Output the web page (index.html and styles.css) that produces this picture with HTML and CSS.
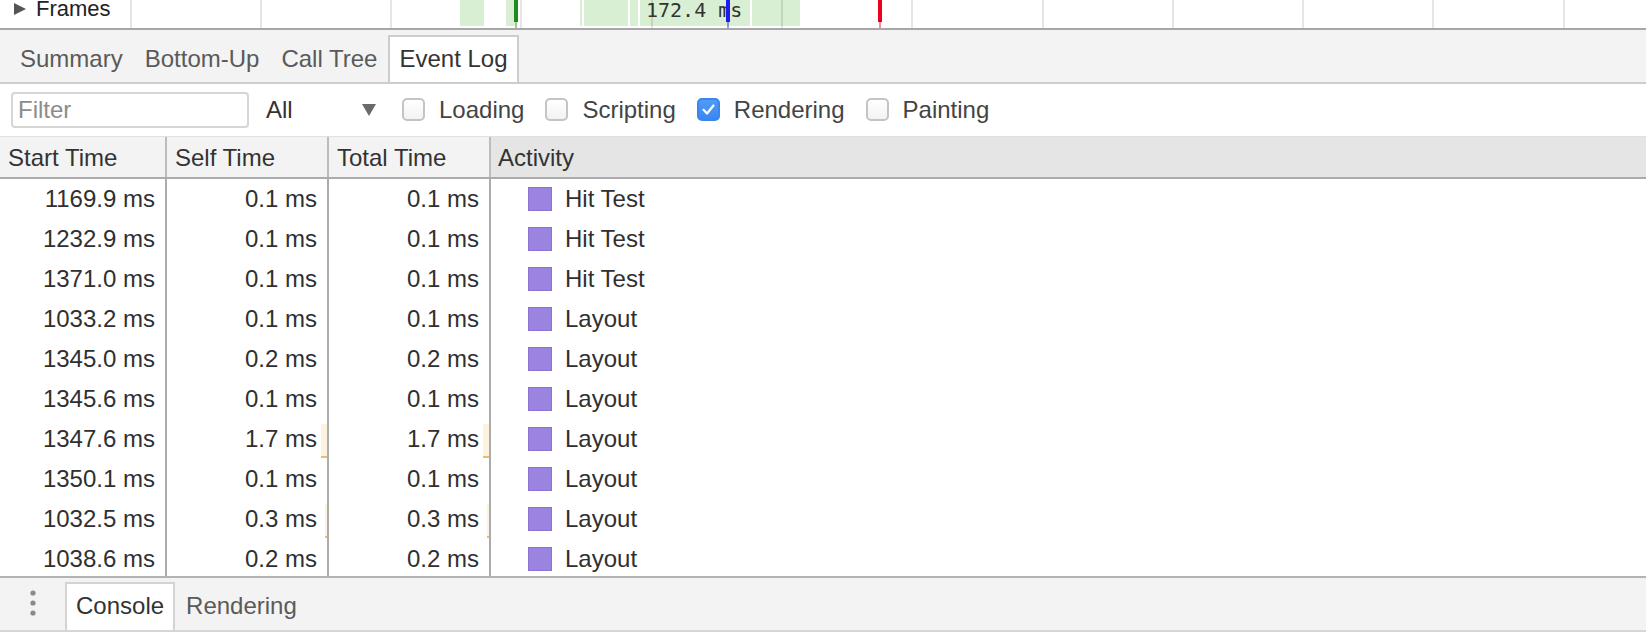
FILE: index.html
```html
<!DOCTYPE html>
<html>
<head>
<meta charset="utf-8">
<link rel="stylesheet" href="styles.css">
</head>
<body>
<div class="frames">
  <div class="frames-label"><span class="tri"></span><span class="frames-text">Frames</span></div>
  <div class="canvas">
    <div class="fr" style="left:460px;width:24px"></div>
    <div class="fr" style="left:506px;width:9px"></div>
    <div class="fr" style="left:580px;width:2px"></div>
    <div class="fr" style="left:584px;width:44px"></div>
    <div class="fr" style="left:630px;width:8px"></div>
    <div class="fr" style="left:640px;width:110px"></div>
    <div class="fr" style="left:752px;width:48px"></div>
    <div class="gl" style="left:130px"></div>
    <div class="gl" style="left:260px"></div>
    <div class="gl" style="left:390px"></div>
    <div class="gl" style="left:520px"></div>
    <div class="gl" style="left:651px"></div>
    <div class="gl" style="left:781px"></div>
    <div class="gl" style="left:911px"></div>
    <div class="gl" style="left:1042px"></div>
    <div class="gl" style="left:1172px"></div>
    <div class="gl" style="left:1302px"></div>
    <div class="gl" style="left:1432px"></div>
    <div class="gl" style="left:1563px"></div>
    <div class="frame-time" style="left:646px">172.4 ms</div>
    <div class="mk mk-green" style="left:514px"></div>
    <div class="mk mk-blue" style="left:726px"></div>
    <div class="mk mk-red" style="left:878px"></div>
  </div>
</div>

<div class="tabs">
  <div class="tab">Summary</div>
  <div class="tab">Bottom-Up</div>
  <div class="tab">Call Tree</div>
  <div class="tab active">Event Log</div>
</div>

<div class="filterbar">
  <div class="filter-input">Filter</div>
  <div class="select"><span>All</span><span class="arrow"></span></div>
  <div class="checks">
    <label class="check"><span class="box"></span>Loading</label>
    <label class="check"><span class="box"></span>Scripting</label>
    <label class="check"><span class="box checked"><svg width="19" height="19" viewBox="0 0 19 19"><path d="M4.5 9.8 L8 13.5 L14.5 5.5" fill="none" stroke="#fff" stroke-width="2.2" stroke-linecap="round" stroke-linejoin="round"/></svg></span>Rendering</label>
    <label class="check"><span class="box"></span>Painting</label>
  </div>
</div>

<div class="thead">
  <div class="th c1">Start Time</div>
  <div class="th c2">Self Time</div>
  <div class="th c3">Total Time</div>
  <div class="th c4">Activity</div>
</div>

<div class="tbody">
  <div class="row"><div class="td c1">1169.9 ms</div><div class="td c2">0.1 ms</div><div class="td c3">0.1 ms</div><div class="td c4"><span class="sq"></span>Hit Test</div></div>
  <div class="row"><div class="td c1">1232.9 ms</div><div class="td c2">0.1 ms</div><div class="td c3">0.1 ms</div><div class="td c4"><span class="sq"></span>Hit Test</div></div>
  <div class="row"><div class="td c1">1371.0 ms</div><div class="td c2">0.1 ms</div><div class="td c3">0.1 ms</div><div class="td c4"><span class="sq"></span>Hit Test</div></div>
  <div class="row"><div class="td c1">1033.2 ms</div><div class="td c2">0.1 ms</div><div class="td c3">0.1 ms</div><div class="td c4"><span class="sq"></span>Layout</div></div>
  <div class="row"><div class="td c1">1345.0 ms</div><div class="td c2">0.2 ms</div><div class="td c3">0.2 ms</div><div class="td c4"><span class="sq"></span>Layout</div></div>
  <div class="row"><div class="td c1">1345.6 ms</div><div class="td c2">0.1 ms</div><div class="td c3">0.1 ms</div><div class="td c4"><span class="sq"></span>Layout</div></div>
  <div class="row"><div class="td c1">1347.6 ms</div><div class="td c2 bar" style="--bar:6px">1.7 ms</div><div class="td c3 bar" style="--bar:6px">1.7 ms</div><div class="td c4"><span class="sq"></span>Layout</div></div>
  <div class="row"><div class="td c1">1350.1 ms</div><div class="td c2">0.1 ms</div><div class="td c3">0.1 ms</div><div class="td c4"><span class="sq"></span>Layout</div></div>
  <div class="row"><div class="td c1">1032.5 ms</div><div class="td c2 bar" style="--bar:2px">0.3 ms</div><div class="td c3 bar" style="--bar:2px">0.3 ms</div><div class="td c4"><span class="sq"></span>Layout</div></div>
  <div class="row"><div class="td c1">1038.6 ms</div><div class="td c2">0.2 ms</div><div class="td c3">0.2 ms</div><div class="td c4"><span class="sq"></span>Layout</div></div>
</div>

<div class="drawer">
  <div class="more"><svg width="10" height="30" viewBox="0 0 10 30"><circle cx="5" cy="4" r="2.6" fill="#8a8a8a"/><circle cx="5" cy="14" r="2.6" fill="#8a8a8a"/><circle cx="5" cy="24" r="2.6" fill="#8a8a8a"/></svg></div>
  <div class="tab dtab active">Console</div>
  <div class="tab dtab">Rendering</div>
</div>
</body>
</html>
```
FILE: styles.css
```css
* { box-sizing: border-box; }
html, body { margin: 0; padding: 0; }
body {
  width: 1646px;
  height: 634px;
  overflow: hidden;
  display: flex;
  flex-direction: column;
  font-family: "Liberation Sans", Arial, sans-serif;
  font-size: 24px;
  color: #333;
  background: #fff;
}

/* Frames row */
.frames {
  position: relative;
  flex: none;
  height: 30px;
  border-bottom: 2px solid #a7a7a7;
  overflow: hidden;
  background: #fff;
}
.frames-label {
  display: flex;
  align-items: flex-start;
  padding-left: 14px;
  position: relative;
  z-index: 1;
}
.tri {
  margin-top: 3px;
  width: 0;
  height: 0;
  border-top: 6px solid transparent;
  border-bottom: 6px solid transparent;
  border-left: 12px solid #555;
}
.frames-text {
  margin-left: 10px;
  margin-top: -2px;
  font-size: 22px;
  line-height: 22px;
  color: #222;
}
.canvas { position: absolute; inset: 0; }
.fr { position: absolute; top: 0; height: 26px; background: #d9efd3; }
.gl { position: absolute; top: 0; bottom: 0; width: 2px; background: rgba(0,0,0,0.1); }
.frame-time {
  position: absolute;
  top: 0;
  font-family: "DejaVu Sans Mono", monospace;
  font-size: 20px;
  line-height: 21px;
  color: #333;
}
.mk { position: absolute; top: 0; height: 22px; width: 4px; }
.mk::after {
  content: "";
  position: absolute;
  left: 1px;
  top: 22px;
  width: 2px;
  height: 6px;
  opacity: 0.45;
  background: inherit;
}
.mk-green { background: #1f8a1f; }
.mk-blue { background: #1c1cf0; }
.mk-red { background: #ea001f; }

/* Tabs */
.tabs {
  flex: none;
  height: 54px;
  background: #f3f3f3;
  border-bottom: 2px solid #cdcdcd;
  display: flex;
  align-items: flex-end;
  padding-left: 9px;
}
.tab {
  height: 47px;
  padding: 0 9px;
  border: 2px solid transparent;
  border-bottom: 0;
  display: flex;
  align-items: center;
  color: #5a5a5a;
  white-space: nowrap;
  padding-bottom: 2px;
}
.tab.active {
  background: #fff;
  border-color: #cdcdcd;
  color: #333;
}

/* Filter bar */
.filterbar {
  flex: none;
  height: 53px;
  border-bottom: 1px solid #e0e0e0;
  display: flex;
  align-items: center;
  padding-left: 11px;
}
.filter-input {
  width: 238px;
  height: 36px;
  border: 2px solid #d6d6d6;
  border-radius: 4px;
  padding-left: 5px;
  display: flex;
  align-items: center;
  color: #8c8c8c;
}
.select {
  width: 110px;
  margin-left: 17px;
  display: flex;
  align-items: center;
  justify-content: space-between;
  color: #333;
}
.arrow {
  width: 0;
  height: 0;
  border-left: 7px solid transparent;
  border-right: 7px solid transparent;
  border-top: 12px solid #6a6a6a;
}
.checks {
  display: flex;
  align-items: center;
  margin-left: 26px;
}
.check {
  display: flex;
  align-items: center;
  margin-right: 21px;
  color: #444;
}
.box {
  width: 23px;
  height: 23px;
  border: 2px solid #c4c4c4;
  border-radius: 5px;
  margin-right: 14px;
  background: linear-gradient(#fff, #f3f3f3);
  display: flex;
  align-items: center;
  justify-content: center;
  margin-top: -2px;
}
.box.checked {
  background: linear-gradient(#4f9bf8, #3b87f0);
  border-color: #3b86ec;
}

/* Table */
.thead {
  flex: none;
  height: 42px;
  background: #f3f3f3;
  border-bottom: 2px solid #ababab;
  display: flex;
}
.th {
  display: flex;
  align-items: center;
  padding-left: 8px;
  border-right: 2px solid #bcbcbc;
  padding-top: 2px;
}
.c1 { width: 167px; flex: none; }
.c2 { width: 162px; flex: none; }
.c3 { width: 162px; flex: none; }
.c4 { flex: 1; }
.th.c4 { background: #e5e5e5; padding-left: 7px; border-right: 0; }

.tbody {
  flex: 1;
  overflow: hidden;
}
.row {
  height: 40px;
  display: flex;
}
.td {
  display: flex;
  align-items: center;
  justify-content: flex-end;
  padding-right: 10px;
  border-right: 2px solid #ababab;
  color: #303030;
}
.td.c4 {
  justify-content: flex-start;
  padding-left: 37px;
  border-right: 0;
}
.sq {
  width: 24px;
  height: 24px;
  background: #9b83e0;
  border: 1px solid #8b72d4;
  margin-right: 13px;
}
.bar {
  background:
    linear-gradient(#eac064, #eac064) right 0 bottom 1px / var(--bar) 2px no-repeat,
    linear-gradient(#fcf2de, #fcf2de) right 0 top 5px / var(--bar) 32px no-repeat;
}

/* Drawer */
.drawer {
  flex: none;
  height: 56px;
  margin-bottom: 2px;
  background: #f3f3f3;
  border-top: 2px solid #b3b3b3;
  border-bottom: 2px solid #d6d6d6;
  display: flex;
  align-items: flex-end;
}
.more {
  width: 65px;
  align-self: center;
  display: flex;
  justify-content: center;
}
.more svg { display: block; }
.dtab { height: 48px; }
.dtab.active { border-color: #d3d3d3; }
```
